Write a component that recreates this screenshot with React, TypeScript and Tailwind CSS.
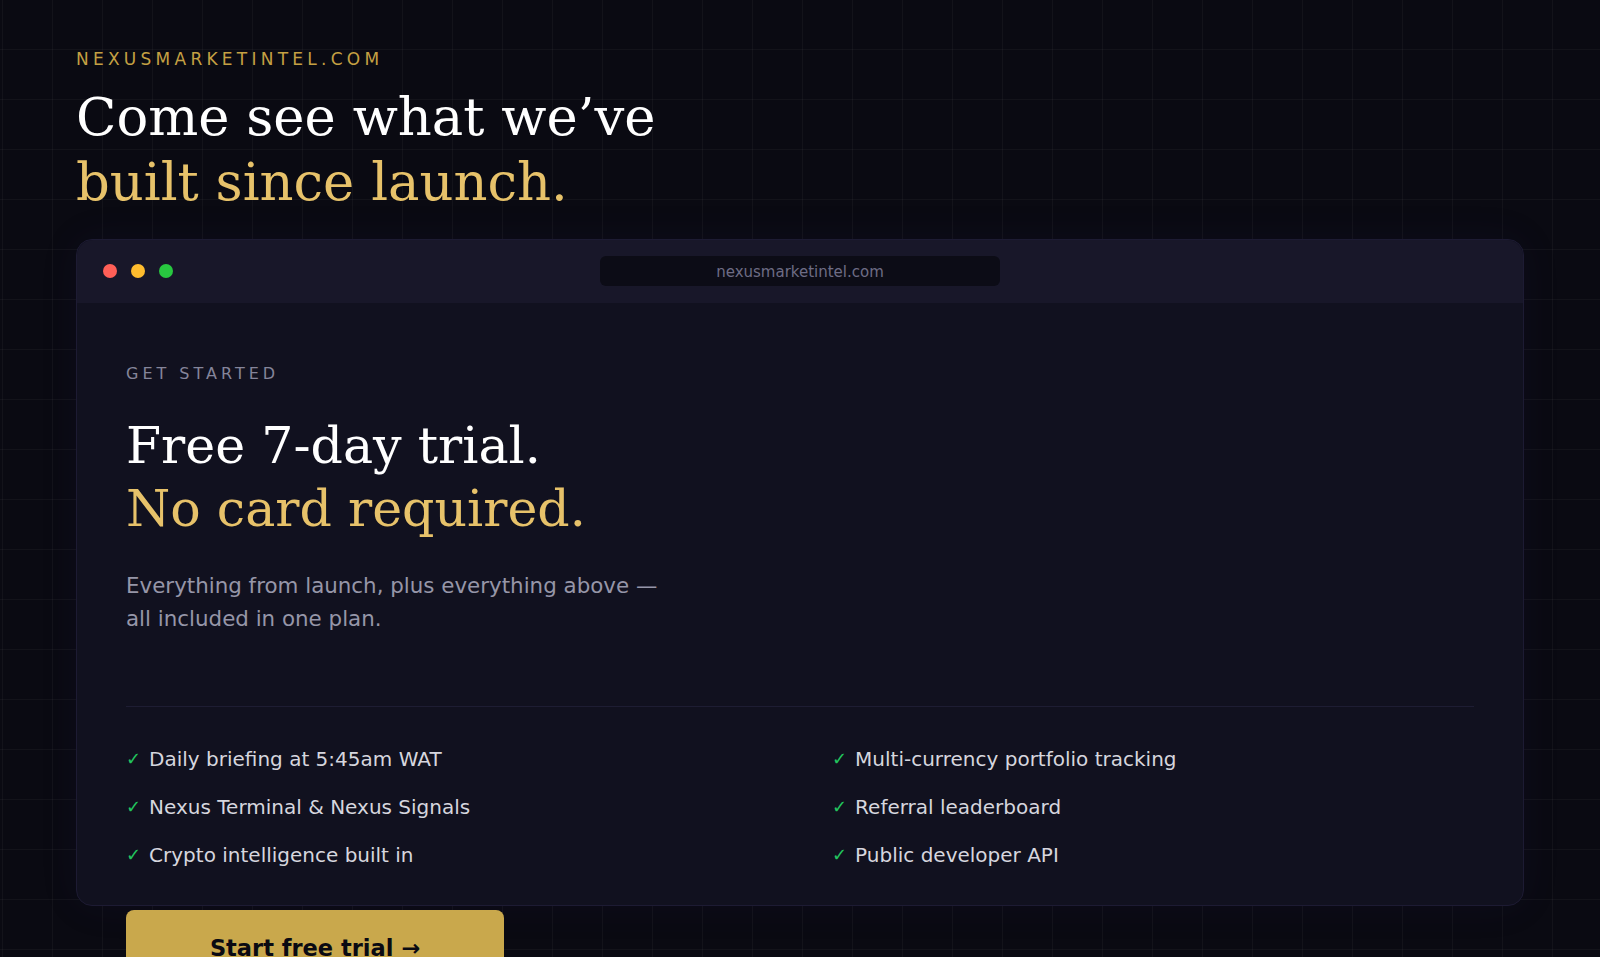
const features = [
  "Daily briefing at 5:45am WAT",
  "Multi-currency portfolio tracking",
  "Nexus Terminal & Nexus Signals",
  "Referral leaderboard",
  "Crypto intelligence built in",
  "Public developer API",
];

const App: React.FC = () => {
  return (
    <div className="h-[957px] overflow-hidden bg-[#0a0a12] bg-[linear-gradient(to_right,rgba(255,255,255,0.035)_1px,transparent_1px),linear-gradient(to_bottom,rgba(255,255,255,0.035)_1px,transparent_1px)] bg-[size:50px_50px] bg-[position:2px_-1px] px-[76px] pt-[47px] font-['DejaVu_Sans',sans-serif]">
      {/* Intro */}
      <p className="text-[17px] leading-6 tracking-[0.25em] text-[#c4a043]">NEXUSMARKETINTEL.COM</p>
      <h1 className="mt-[14px] font-['DejaVu_Serif',serif] text-[52.8px] leading-[1.23] text-white">
        Come see what we’ve
        <br />
        <span className="text-[#e7c26a]">built since launch.</span>
      </h1>

      {/* Browser window */}
      <div className="mt-6 h-[667px] rounded-2xl border border-[#1d1b33] bg-[#11111f] shadow-[0_0_40px_rgba(60,50,140,0.08)]">
        <div className="grid h-[63px] grid-cols-[1fr_400px_1fr] items-center rounded-t-2xl bg-[#181729]">
          <div className="flex items-center gap-[14px] pl-[26px]">
            <span className="h-[14px] w-[14px] rounded-full bg-[#ff5f57]" />
            <span className="h-[14px] w-[14px] rounded-full bg-[#febc2e]" />
            <span className="h-[14px] w-[14px] rounded-full bg-[#28c840]" />
          </div>
          <div className="flex h-[30px] items-center justify-center rounded-md bg-[#0c0c16] pt-px text-[15px] text-[#6e6c85]">
            nexusmarketintel.com
          </div>
          <div />
        </div>

        <div className="px-[49px] pt-[61px]">
          <p className="text-base leading-5 tracking-[0.25em] text-[#85859a]">GET STARTED</p>
          <h2 className="mt-[30px] font-['DejaVu_Serif',serif] text-[50.6px] leading-[1.25] text-white">
            Free 7-day trial.
            <br />
            <span className="text-[#e7c26a]">No card required.</span>
          </h2>
          <p className="mt-[29px] max-w-[545px] text-[21.4px] leading-[33px] text-[#9696a8]">
            Everything from launch, plus everything above — all included in one plan.
          </p>

          <div className="mt-[71px] h-px bg-[#1e1d33]" />

          <ul className="mt-[38px] grid grid-cols-2 gap-x-16 gap-y-5">
            {features.map((f) => (
              <li key={f} className="flex items-center gap-2 text-xl leading-7 text-[#d6d6de]">
                <span className="text-lg text-[#22c55e]">✓</span>
                {f}
              </li>
            ))}
          </ul>

          <button className="mt-[41px] w-[378px] rounded-lg bg-[#c9a84c] py-6 text-[22.5px] leading-7 font-bold text-[#0a0a12]">
            Start free trial →
          </button>
        </div>
      </div>
    </div>
  );
};

export default App;
